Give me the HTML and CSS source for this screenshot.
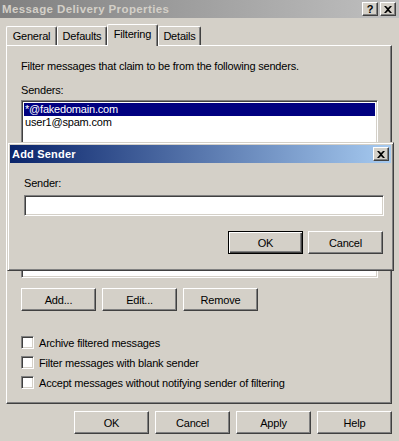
FILE: index.html
```html
<!DOCTYPE html>
<html>
<head>
<meta charset="utf-8">
<link rel="stylesheet" href="styles.css">
</head>
<body>
<div class="window">
  <div class="titlebar inactive">
    <span class="title main-title">Message Delivery Properties</span>
    <div class="caption-buttons">
      <span class="cap-btn">?</span>
      <span class="cap-btn gap">
        <svg width="8" height="7" viewBox="0 0 8 7"><path d="M0 0h2l2 2 2-2h2L5 3.5 8 7H6L4 5 2 7H0l3-3.5z" fill="#000"/></svg>
      </span>
    </div>
  </div>
  <div class="tabs">
    <div class="tab first">General</div>
    <div class="tab second">Defaults</div>
    <div class="tab active">Filtering</div>
    <div class="tab fourth">Details</div>
  </div>
  <div class="panel">
    <p class="intro">Filter messages that claim to be from the following senders.</p>
    <p class="label">Senders:</p>
    <div class="listbox">
      <div class="item selected">*@fakedomain.com</div>
      <div class="item">user1@spam.com</div>
    </div>
    <div class="row-buttons">
      <button class="btn">Add...</button>
      <button class="btn">Edit...</button>
      <button class="btn">Remove</button>
    </div>
    <div class="checks">
      <label class="check"><span class="box"></span>Archive filtered messages</label>
      <label class="check"><span class="box"></span>Filter messages with blank sender</label>
      <label class="check"><span class="box"></span>Accept messages without notifying sender of filtering</label>
    </div>
  </div>
  <div class="footer">
    <button class="btn">OK</button>
    <button class="btn">Cancel</button>
    <button class="btn">Apply</button>
    <button class="btn">Help</button>
  </div>

  <div class="dialog">
    <div class="titlebar active-title">
      <span class="title">Add Sender</span>
      <span class="cap-btn">
        <svg width="8" height="7" viewBox="0 0 8 7"><path d="M0 0h2l2 2 2-2h2L5 3.5 8 7H6L4 5 2 7H0l3-3.5z" fill="#000"/></svg>
      </span>
    </div>
    <div class="dialog-body">
      <p class="label">Sender:</p>
      <div class="textbox"></div>
      <div class="dialog-buttons">
        <button class="btn default">OK</button>
        <button class="btn">Cancel</button>
      </div>
    </div>
  </div>
</div>
</body>
</html>
```
FILE: styles.css
```css
* { box-sizing: border-box; }
html, body {
  margin: 0;
  padding: 0;
  background: #d4d0c8;
}
body {
  width: 399px;
  height: 441px;
  overflow: hidden;
  font-family: "Liberation Sans", Arial, sans-serif;
  font-size: 11px;
  letter-spacing: -0.2px;
  color: #000;
}
p { margin: 0; }

.window {
  position: relative;
  width: 399px;
  height: 441px;
  display: flex;
  flex-direction: column;
}

.titlebar {
  height: 18px;
  display: flex;
  align-items: center;
  justify-content: space-between;
  padding: 0 3px 0 2px;
}
.titlebar.inactive {
  background: linear-gradient(to right, #808080, #c0c0c0);
  color: #d4d0c8;
}
.title {
  font-weight: bold;
  font-size: 11px;
  letter-spacing: 0.2px;
  font-family: "Liberation Sans", Arial, sans-serif;
}
.main-title {
  font-size: 11.5px;
  letter-spacing: 0.4px;
}
.caption-buttons { display: flex; }
.cap-btn {
  width: 16px;
  height: 14px;
  background: #d4d0c8;
  border-top: 1px solid #fff;
  border-left: 1px solid #fff;
  border-right: 1px solid #404040;
  border-bottom: 1px solid #404040;
  box-shadow: inset -1px -1px 0 #808080;
  display: flex;
  align-items: center;
  justify-content: center;
  font-weight: bold;
  font-size: 11px;
  letter-spacing: 0;
  color: #000;
  line-height: 1;
}
.cap-btn.gap { margin-left: 2px; }

.tabs {
  display: flex;
  align-items: flex-end;
  height: 27px;
  padding-left: 6px;
  position: relative;
  z-index: 1;
}
.tab {
  height: 19px;
  border-top: 1px solid #fff;
  border-left: 1px solid #fff;
  border-right: 1px solid #404040;
  border-radius: 2px 2px 0 0;
  box-shadow: inset -1px 0 0 #808080;
  display: flex;
  align-items: center;
  justify-content: center;
  padding-bottom: 1px;
}
.tab.first { width: 51px; }
.tab.second { width: 50px; }
.tab.active {
  width: 51px;
  height: 22px;
  margin-bottom: -1px;
  background: #d4d0c8;
  padding-bottom: 3px;
}
.tab.fourth { width: 43px; }

.panel {
  margin-left: 6px;
  width: 386px;
  height: 359px;
  border-top: 1px solid #fff;
  border-left: 1px solid #fff;
  border-right: 1px solid #404040;
  border-bottom: 1px solid #404040;
  box-shadow: inset -1px -1px 0 #808080;
  padding: 14px 0 0 14px;
  display: flex;
  flex-direction: column;
}
.intro { height: 24px; line-height: 13px; }
.label { line-height: 13px; height: 16px; }

.listbox {
  width: 357px;
  height: 178px;
  background: #fff;
  border-top: 1px solid #808080;
  border-left: 1px solid #808080;
  border-right: 1px solid #fff;
  border-bottom: 1px solid #fff;
  box-shadow: inset 1px 1px 0 #404040, inset -1px -1px 0 #d4d0c8;
  padding: 2px;
}
.item {
  height: 13px;
  line-height: 13px;
  padding-left: 1px;
  white-space: nowrap;
}
.item.selected {
  background: #000080;
  color: #fff;
}

.btn {
  width: 75px;
  height: 23px;
  font-family: "Liberation Sans", Arial, sans-serif;
  font-size: 11px;
  letter-spacing: -0.2px;
  color: #000;
  background: #d4d0c8;
  border-top: 1px solid #fff;
  border-left: 1px solid #fff;
  border-right: 1px solid #404040;
  border-bottom: 1px solid #404040;
  box-shadow: inset -1px -1px 0 #808080;
  padding: 0;
  margin: 0;
}
.btn.default {
  border: 1px solid #000;
  box-shadow: inset 1px 1px 0 #fff, inset -1px -1px 0 #404040, inset -2px -2px 0 #808080;
}

.row-buttons {
  display: flex;
  gap: 6px;
  margin-top: 10px;
}

.checks {
  display: flex;
  flex-direction: column;
  gap: 7px;
  margin-top: 25px;
}
.check {
  display: flex;
  align-items: center;
  height: 13px;
  white-space: nowrap;
}
.box {
  width: 13px;
  height: 13px;
  background: #fff;
  border-top: 1px solid #808080;
  border-left: 1px solid #808080;
  border-right: 1px solid #fff;
  border-bottom: 1px solid #fff;
  box-shadow: inset 1px 1px 0 #404040, inset -1px -1px 0 #d4d0c8;
  margin-right: 5px;
  flex: none;
}

.footer {
  display: flex;
  justify-content: flex-end;
  gap: 6px;
  padding-right: 7px;
  margin-top: 7px;
}

.dialog {
  position: absolute;
  left: 7px;
  top: 142px;
  width: 387px;
  height: 129px;
  background: #d4d0c8;
  border-top: 1px solid #d4d0c8;
  border-left: 1px solid #d4d0c8;
  border-right: 1px solid #404040;
  border-bottom: 1px solid #404040;
  box-shadow: inset 1px 1px 0 #fff, inset -1px -1px 0 #808080;
  padding: 2px;
  display: flex;
  flex-direction: column;
}
.active-title {
  background: linear-gradient(to right, #0a246a, #a6caf0);
  color: #fff;
  padding-right: 2px;
}
.dialog-body {
  padding: 14px 7px 0 14px;
  display: flex;
  flex-direction: column;
}
.textbox {
  width: 360px;
  height: 21px;
  background: #fff;
  border-top: 1px solid #808080;
  border-left: 1px solid #808080;
  border-right: 1px solid #fff;
  border-bottom: 1px solid #fff;
  box-shadow: inset 1px 1px 0 #404040, inset -1px -1px 0 #d4d0c8;
  margin-top: 2px;
}
.dialog-buttons {
  display: flex;
  justify-content: flex-end;
  gap: 5px;
  margin-top: 15px;
  padding-right: 1px;
}
```
